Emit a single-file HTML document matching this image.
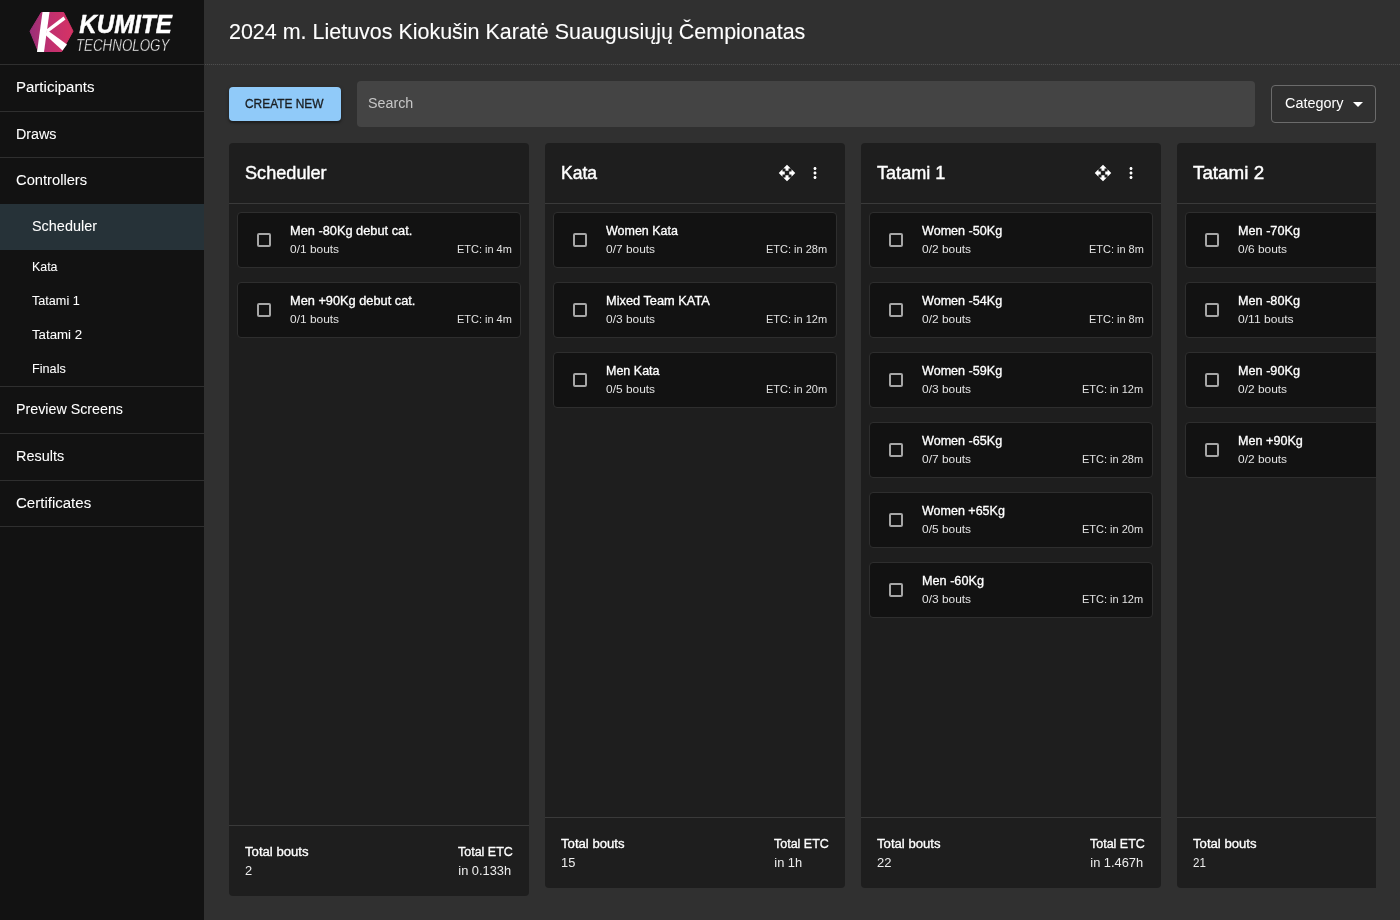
<!DOCTYPE html>
<html lang="en">
<head>
<meta charset="utf-8">
<title>Scheduler</title>
<style>
*{box-sizing:border-box;margin:0;padding:0}
html,body{width:1400px;height:920px;overflow:hidden;background:#303030;color:#fff;font-family:"Liberation Sans",sans-serif}
.x{position:absolute;white-space:nowrap;line-height:1.2;transform-origin:0 50%}
.n{font-size:14.7px;color:#fff;-webkit-text-stroke:.06px #fff}
.s{font-size:12.85px;color:#fff;-webkit-text-stroke:.06px #fff}
.h{font-size:22.1px;color:#fff;-webkit-text-stroke:.1px #fff}
.bt{font-size:12.9px;color:#1b1f22;-webkit-text-stroke:.35px #1b1f22}
.se{font-size:14.7px;color:#c6c6c6}
.ca{font-size:14.7px;color:#fff}
.ct{font-size:18.4px;color:#fff;-webkit-text-stroke:.42px #fff}
.k1{font-size:12.85px;color:#fff;-webkit-text-stroke:.32px #fff}
.k2{font-size:10.9px;color:#e2e2e2}
.f1{font-size:12.85px;color:#fff;-webkit-text-stroke:.32px #fff}
.f2{font-size:12.85px;color:#ededed}
#side{position:absolute;left:0;top:0;width:204px;height:920px;background:#121212}
#logo{position:absolute;left:0;top:0;width:204px;height:64px;will-change:transform}
.ln{position:absolute;left:0;width:204px;height:1px;background:#2f2f2f}
#sel{position:absolute;left:0;top:204px;width:204px;height:46px;background:#263238}
#hl{position:absolute;left:205px;top:64px;width:1195px;height:1px;background:repeating-linear-gradient(90deg,#4d4d4d 0,#4d4d4d 1.3px,#353535 1.3px,#353535 2px)}
#btn{position:absolute;left:229px;top:87px;width:112px;height:34px;background:#90caf9;border-radius:4px;box-shadow:0 2px 2px rgba(0,0,0,.3),0 1px 4px rgba(0,0,0,.2)}
#search{position:absolute;left:357px;top:81px;width:898px;height:46px;background:#444444;border-radius:4px}
#cat{position:absolute;left:1271px;top:85px;width:105px;height:38px;border:1px solid #6b6b6b;border-radius:4px}
#tri{position:absolute;left:1353px;top:102px;width:0;height:0;border-left:5px solid transparent;border-right:5px solid transparent;border-top:5px solid #fff}
#txt{position:absolute;left:0;top:0;width:1376px;height:920px;will-change:transform}
#clip{position:absolute;left:0;top:0;width:1376px;height:920px;overflow:hidden}
.col{position:absolute;top:143px;width:300px;background:#1e1e1e;border-radius:4px}
.cl{position:absolute;left:0;width:300px;height:1px;background:#3a3a3a}
.card{position:absolute;left:8px;width:284px;height:56px;background:#121212;border:1px solid #2e2e2e;border-radius:4px}
.cb{position:absolute;left:19px;top:20px;width:14px;height:14px;border:2px solid #a6a6a6;border-radius:2px}
.ic{position:absolute;fill:#fff}

</style>
</head>
<body>
<div id="side"><svg id="logo" viewBox="0 0 204 64">
<defs><linearGradient id="g" x1="0" x2="1" y1="0" y2="0"><stop offset="0" stop-color="#9a2f78"/><stop offset=".45" stop-color="#c03070"/><stop offset="1" stop-color="#d63364"/></linearGradient></defs>
<polygon points="41.3,12.5 63.7,12.5 73,31.2 61.7,51.5 38.3,51.5 30,31.2" fill="url(#g)" stroke="url(#g)" stroke-width="1" stroke-linejoin="round"/>
<polygon points="42.5,12 49.5,12 44,52 37,52" fill="#fff"/>
<polygon points="46.5,29.5 63.5,16.5 65.5,19.5 48,32.5" fill="#fff"/>
<polygon points="47,30 67,44.5 62.5,50.5 45.5,35" fill="#fff"/>
<text x="79.3" y="33" font-family="Liberation Sans, sans-serif" font-weight="bold" font-style="italic" font-size="26.6" fill="#fff" stroke="#fff" stroke-width=".5" textLength="92.5" lengthAdjust="spacingAndGlyphs">KUMITE</text>
<text x="75.9" y="50.8" font-family="Liberation Sans, sans-serif" font-style="italic" font-size="16.6" fill="#f0f0f0" stroke="#121212" stroke-width=".35" textLength="93.5" lengthAdjust="spacingAndGlyphs">TECHNOLOGY</text>
</svg>
<div class="ln" style="top:64px"></div>
<div class="ln" style="top:111px"></div>
<div class="ln" style="top:157px"></div>
<div class="ln" style="top:386px"></div>
<div class="ln" style="top:433px"></div>
<div class="ln" style="top:480px"></div>
<div class="ln" style="top:526px"></div>
<div id="sel"></div></div>
<div id="hl"></div><div id="btn"></div><div id="search"></div><div id="cat"></div><div id="tri"></div>
<div id="clip">
<div class="col" style="left:229px;height:753px">
<div class="cl" style="top:60px"></div>
<div class="card" style="top:69px"><div class="cb"></div></div>
<div class="card" style="top:139px"><div class="cb"></div></div>
<div class="cl" style="top:682px"></div>
</div>
<div class="col" style="left:545px;height:745px">
<div class="cl" style="top:60px"></div>
<svg class="ic" viewBox="0 0 24 24" width="18" height="18" style="left:233px;top:21px"><path d="M10 9h4V6h3l-5-5-5 5h3v3zm-1 1H6V7l-5 5 5 5v-3h3v-4zm14 2l-5-5v3h-3v4h3v3l5-5zm-9 3h-4v3H7l5 5 5-5h-3v-3z"/></svg><svg class="ic" viewBox="0 0 24 24" width="18" height="18" style="left:261px;top:21px"><path d="M12 8c1.1 0 2-.9 2-2s-.9-2-2-2-2 .9-2 2 .9 2 2 2zm0 2c-1.1 0-2 .9-2 2s.9 2 2 2 2-.9 2-2-.9-2-2-2zm0 6c-1.1 0-2 .9-2 2s.9 2 2 2 2-.9 2-2-.9-2-2-2z"/></svg>
<div class="card" style="top:69px"><div class="cb"></div></div>
<div class="card" style="top:139px"><div class="cb"></div></div>
<div class="card" style="top:209px"><div class="cb"></div></div>
<div class="cl" style="top:674px"></div>
</div>
<div class="col" style="left:861px;height:745px">
<div class="cl" style="top:60px"></div>
<svg class="ic" viewBox="0 0 24 24" width="18" height="18" style="left:233px;top:21px"><path d="M10 9h4V6h3l-5-5-5 5h3v3zm-1 1H6V7l-5 5 5 5v-3h3v-4zm14 2l-5-5v3h-3v4h3v3l5-5zm-9 3h-4v3H7l5 5 5-5h-3v-3z"/></svg><svg class="ic" viewBox="0 0 24 24" width="18" height="18" style="left:261px;top:21px"><path d="M12 8c1.1 0 2-.9 2-2s-.9-2-2-2-2 .9-2 2 .9 2 2 2zm0 2c-1.1 0-2 .9-2 2s.9 2 2 2 2-.9 2-2-.9-2-2-2zm0 6c-1.1 0-2 .9-2 2s.9 2 2 2 2-.9 2-2-.9-2-2-2z"/></svg>
<div class="card" style="top:69px"><div class="cb"></div></div>
<div class="card" style="top:139px"><div class="cb"></div></div>
<div class="card" style="top:209px"><div class="cb"></div></div>
<div class="card" style="top:279px"><div class="cb"></div></div>
<div class="card" style="top:349px"><div class="cb"></div></div>
<div class="card" style="top:419px"><div class="cb"></div></div>
<div class="cl" style="top:674px"></div>
</div>
<div class="col" style="left:1177px;height:745px">
<div class="cl" style="top:60px"></div>
<svg class="ic" viewBox="0 0 24 24" width="18" height="18" style="left:233px;top:21px"><path d="M10 9h4V6h3l-5-5-5 5h3v3zm-1 1H6V7l-5 5 5 5v-3h3v-4zm14 2l-5-5v3h-3v4h3v3l5-5zm-9 3h-4v3H7l5 5 5-5h-3v-3z"/></svg><svg class="ic" viewBox="0 0 24 24" width="18" height="18" style="left:261px;top:21px"><path d="M12 8c1.1 0 2-.9 2-2s-.9-2-2-2-2 .9-2 2 .9 2 2 2zm0 2c-1.1 0-2 .9-2 2s.9 2 2 2 2-.9 2-2-.9-2-2-2zm0 6c-1.1 0-2 .9-2 2s.9 2 2 2 2-.9 2-2-.9-2-2-2z"/></svg>
<div class="card" style="top:69px"><div class="cb"></div></div>
<div class="card" style="top:139px"><div class="cb"></div></div>
<div class="card" style="top:209px"><div class="cb"></div></div>
<div class="card" style="top:279px"><div class="cb"></div></div>
<div class="cl" style="top:674px"></div>
</div>
<div id="txt">
<div class="x n" style="left:15.98px;top:79.00px;transform:scaleX(1.0224)">Participants</div>
<div class="x n" style="left:16.03px;top:126.00px;transform:scaleX(0.9737)">Draws</div>
<div class="x n" style="left:16.10px;top:172.00px">Controllers</div>
<div class="x n" style="left:31.67px;top:218.00px;transform:scaleX(0.9821)">Scheduler</div>
<div class="x s" style="left:32.32px;top:259.00px;transform:scaleX(0.9659)">Kata</div>
<div class="x s" style="left:32.36px;top:293.00px;transform:scaleX(0.9830)">Tatami 1</div>
<div class="x s" style="left:32.24px;top:327.00px;transform:scaleX(1.0302)">Tatami 2</div>
<div class="x s" style="left:32.15px;top:361.00px;transform:scaleX(0.9869)">Finals</div>
<div class="x n" style="left:16.03px;top:401.00px;transform:scaleX(0.9704)">Preview Screens</div>
<div class="x n" style="left:16.00px;top:448.00px;transform:scaleX(0.9828)">Results</div>
<div class="x n" style="left:16.19px;top:495.00px;transform:scaleX(1.0229)">Certificates</div>
<div class="x h" style="left:229.27px;top:19.00px;transform:scaleX(0.9715)">2024 m. Lietuvos Kiokušin Karatė Suaugusiųjų Čempionatas</div>
<div class="x bt" style="left:245.23px;top:96.00px;transform:scaleX(0.9234)">CREATE NEW</div>
<div class="x se" style="left:367.96px;top:95.00px;transform:scaleX(0.9730)">Search</div>
<div class="x ca" style="left:1285.05px;top:95.00px;transform:scaleX(0.9813)">Category</div>
<div class="x ct" style="left:244.67px;top:162.00px;transform:scaleX(0.9859)">Scheduler</div>
<div class="x k1" style="left:290.04px;top:223.00px;transform:scaleX(0.9955)">Men -80Kg debut cat.</div>
<div class="x k2" style="left:289.80px;top:243.00px;transform:scaleX(1.0953)">0/1 bouts</div>
<div class="x k2" style="left:457.12px;top:243.00px;transform:scaleX(1.0071)">ETC: in 4m</div>
<div class="x k1" style="left:290.02px;top:293.00px;transform:scaleX(0.9947)">Men +90Kg debut cat.</div>
<div class="x k2" style="left:289.80px;top:313.00px;transform:scaleX(1.0953)">0/1 bouts</div>
<div class="x k2" style="left:457.12px;top:313.00px;transform:scaleX(1.0071)">ETC: in 4m</div>
<div class="x f1" style="left:245.35px;top:844.00px;transform:scaleX(1.0233)">Total bouts</div>
<div class="x f2" style="left:245.00px;top:863.00px">2</div>
<div class="x f1" style="left:458.16px;top:844.00px;transform:scaleX(0.9723)">Total ETC</div>
<div class="x f2" style="left:458.30px;top:863.00px">in 0.133h</div>
<div class="x ct" style="left:561.23px;top:162.00px;transform:scaleX(0.9528)">Kata</div>
<div class="x k1" style="left:606.24px;top:223.00px;transform:scaleX(0.9724)">Women Kata</div>
<div class="x k2" style="left:605.81px;top:243.00px;transform:scaleX(1.0952)">0/7 bouts</div>
<div class="x k2" style="left:766.38px;top:243.00px;transform:scaleX(1.0093)">ETC: in 28m</div>
<div class="x k1" style="left:606.11px;top:293.00px;transform:scaleX(0.9967)">Mixed Team KATA</div>
<div class="x k2" style="left:606.02px;top:313.00px;transform:scaleX(1.0950)">0/3 bouts</div>
<div class="x k2" style="left:766.38px;top:313.00px;transform:scaleX(1.0093)">ETC: in 12m</div>
<div class="x k1" style="left:606.08px;top:363.00px;transform:scaleX(0.9738)">Men Kata</div>
<div class="x k2" style="left:606.02px;top:383.00px;transform:scaleX(1.0950)">0/5 bouts</div>
<div class="x k2" style="left:766.38px;top:383.00px;transform:scaleX(1.0093)">ETC: in 20m</div>
<div class="x f1" style="left:561.35px;top:836.00px;transform:scaleX(1.0233)">Total bouts</div>
<div class="x f2" style="left:561.00px;top:855.00px">15</div>
<div class="x f1" style="left:774.16px;top:836.00px;transform:scaleX(0.9723)">Total ETC</div>
<div class="x f2" style="left:774.30px;top:855.00px">in 1h</div>
<div class="x ct" style="left:877.16px;top:162.00px;transform:scaleX(0.9839)">Tatami 1</div>
<div class="x k1" style="left:922.24px;top:223.00px;transform:scaleX(0.9791)">Women -50Kg</div>
<div class="x k2" style="left:922.00px;top:243.00px;transform:scaleX(1.0956)">0/2 bouts</div>
<div class="x k2" style="left:1089.12px;top:243.00px;transform:scaleX(1.0071)">ETC: in 8m</div>
<div class="x k1" style="left:922.24px;top:293.00px;transform:scaleX(0.9791)">Women -54Kg</div>
<div class="x k2" style="left:922.00px;top:313.00px;transform:scaleX(1.0956)">0/2 bouts</div>
<div class="x k2" style="left:1089.12px;top:313.00px;transform:scaleX(1.0071)">ETC: in 8m</div>
<div class="x k1" style="left:922.24px;top:363.00px;transform:scaleX(0.9791)">Women -59Kg</div>
<div class="x k2" style="left:922.02px;top:383.00px;transform:scaleX(1.0950)">0/3 bouts</div>
<div class="x k2" style="left:1082.38px;top:383.00px;transform:scaleX(1.0093)">ETC: in 12m</div>
<div class="x k1" style="left:922.24px;top:433.00px;transform:scaleX(0.9791)">Women -65Kg</div>
<div class="x k2" style="left:921.81px;top:453.00px;transform:scaleX(1.0952)">0/7 bouts</div>
<div class="x k2" style="left:1082.38px;top:453.00px;transform:scaleX(1.0093)">ETC: in 28m</div>
<div class="x k1" style="left:922.24px;top:503.00px;transform:scaleX(0.9741)">Women +65Kg</div>
<div class="x k2" style="left:922.02px;top:523.00px;transform:scaleX(1.0950)">0/5 bouts</div>
<div class="x k2" style="left:1082.38px;top:523.00px;transform:scaleX(1.0093)">ETC: in 20m</div>
<div class="x k1" style="left:922.08px;top:573.00px;transform:scaleX(0.9861)">Men -60Kg</div>
<div class="x k2" style="left:922.02px;top:593.00px;transform:scaleX(1.0950)">0/3 bouts</div>
<div class="x k2" style="left:1082.38px;top:593.00px;transform:scaleX(1.0093)">ETC: in 12m</div>
<div class="x f1" style="left:877.35px;top:836.00px;transform:scaleX(1.0233)">Total bouts</div>
<div class="x f2" style="left:877.05px;top:855.00px;transform:scaleX(1.0122)">22</div>
<div class="x f1" style="left:1090.16px;top:836.00px;transform:scaleX(0.9723)">Total ETC</div>
<div class="x f2" style="left:1090.30px;top:855.00px">in 1.467h</div>
<div class="x ct" style="left:1193.33px;top:162.00px;transform:scaleX(1.0231)">Tatami 2</div>
<div class="x k1" style="left:1238.08px;top:223.00px;transform:scaleX(0.9861)">Men -70Kg</div>
<div class="x k2" style="left:1237.80px;top:243.00px;transform:scaleX(1.0953)">0/6 bouts</div>
<div class="x k2" style="left:1402.00px;top:243.00px;transform:scaleX(1.0950)">ETC: in 24m</div>
<div class="x k1" style="left:1238.08px;top:293.00px;transform:scaleX(0.9861)">Men -80Kg</div>
<div class="x k2" style="left:1237.81px;top:313.00px;transform:scaleX(1.1120)">0/11 bouts</div>
<div class="x k2" style="left:1402.00px;top:313.00px;transform:scaleX(1.0950)">ETC: in 44m</div>
<div class="x k1" style="left:1238.08px;top:363.00px;transform:scaleX(0.9861)">Men -90Kg</div>
<div class="x k2" style="left:1238.00px;top:383.00px;transform:scaleX(1.0956)">0/2 bouts</div>
<div class="x k2" style="left:1402.00px;top:383.00px;transform:scaleX(1.0071)">ETC: in 8m</div>
<div class="x k1" style="left:1238.06px;top:433.00px;transform:scaleX(0.9820)">Men +90Kg</div>
<div class="x k2" style="left:1238.00px;top:453.00px;transform:scaleX(1.0956)">0/2 bouts</div>
<div class="x k2" style="left:1402.00px;top:453.00px;transform:scaleX(1.0071)">ETC: in 8m</div>
<div class="x f1" style="left:1193.35px;top:836.00px;transform:scaleX(1.0233)">Total bouts</div>
<div class="x f2" style="left:1193.07px;top:855.00px;transform:scaleX(0.9000)">21</div>
<div class="x f1" style="left:1406.30px;top:836.00px;transform:scaleX(0.9723)">Total ETC</div>
<div class="x f2" style="left:1406.30px;top:855.00px">in 1.4h</div>
</div>
</div>
</body>
</html>
